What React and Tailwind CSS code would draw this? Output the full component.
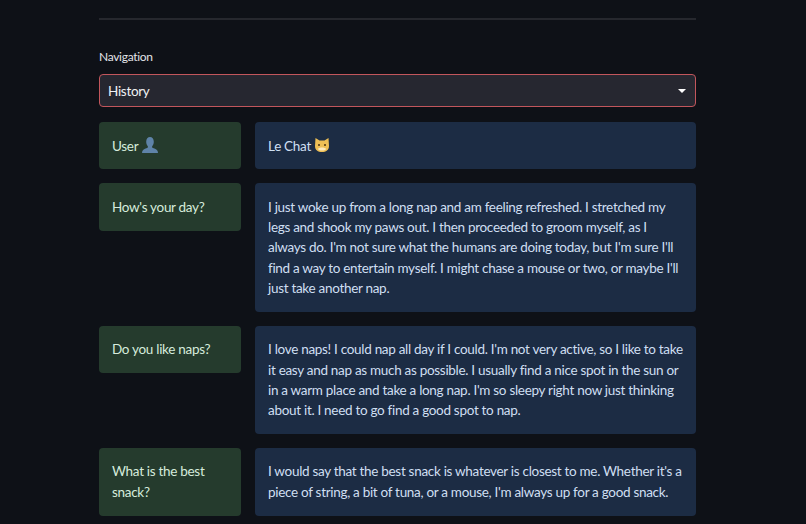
const font = { fontFamily: '"Lato", "Noto Sans", sans-serif' };

const UserIcon = () => (
  <svg viewBox="0 0 18 16" className="inline-block w-[18px] h-4 align-[-2px]">
    <path d="M1 16c0-3 2-4 5-5 1-.5 1-1 .8-1.800C5.800 8 5.200 6.500 5.200 4.800 5.200 2 6.800 0 9 0s3.800 2 3.800 4.800c0 1.700-.6 3.200-1.600 4.400-.2.8-.2 1.300.8 1.800 3 1 5 2 5 5z" fill="#5f83a8" />
  </svg>
);

const CatIcon = () => (
  <svg viewBox="0 0 16 16" className="inline-block w-4 h-4 align-[-2px]">
    <path d="M1.500 1 5.500 3.500h5L14.500 1 15 9c0 4-3 6-7 6s-7-2-7-6z" fill="#eebf55" />
    <path d="M4 12c1-2 7-2 8 0-1 2-7 2-8 0z" fill="#fbe9bd" />
    <circle cx="5" cy="8" r="1" fill="#4a3210" />
    <circle cx="11" cy="8" r="1" fill="#4a3210" />
  </svg>
);

const rows = [
  {
    user: 'How\'s your day?',
    bot: "I just woke up from a long nap and am feeling refreshed. I stretched my legs and shook my paws out. I then proceeded to groom myself, as I always do. I'm not sure what the humans are doing today, but I'm sure I'll find a way to entertain myself. I might chase a mouse or two, or maybe I'll just take another nap.",
  },
  {
    user: 'Do you like naps?',
    bot: "I love naps! I could nap all day if I could. I'm not very active, so I like to take it easy and nap as much as possible. I usually find a nice spot in the sun or in a warm place and take a long nap. I'm so sleepy right now just thinking about it. I need to go find a good spot to nap.",
  },
  {
    user: 'What is the best snack?',
    bot: "I would say that the best snack is whatever is closest to me. Whether it's a piece of string, a bit of tuna, or a mouse, I'm always up for a good snack.",
  },
];

const Row = ({ user, bot }) => (
  <div className="flex items-start gap-[14px]">
    <div className="w-[142px] shrink-0 rounded-[4px] bg-[#253b2d] px-[13px] py-[13.5px] text-[#d6ecdc]">{user}</div>
    <div className="flex-1 rounded-[4px] bg-[#1c2c44] pl-[13px] pr-[11px] py-[13.5px] text-[#cfdff2]">{bot}</div>
  </div>
);

export default function App() {
  return (
    <div className="h-[524px] overflow-hidden bg-[#0e1117] pl-[99px] pr-[110px] text-[13.5px] leading-[20.3px] tracking-[-0.3px]" style={font}>
      <div className="pt-[18px]">
        <hr className="border-t-2 border-[#26282e]" />
        <div className="mt-[29px] text-[12px] leading-[16px] tracking-[-0.3px] text-[#e4e5e8]">Navigation</div>
        <div className="mt-[9px] flex h-[33px] items-center justify-between rounded-[4px] border border-[#c2565c] bg-[#262730] pl-2 pr-[9px] pt-[1px] text-[#f0f1f4]">
          <span>History</span>
          <span className="h-0 w-0 border-x-[4px] border-t-[4px] border-x-transparent border-t-white" />
        </div>
        <div className="mt-[15px] flex flex-col gap-[14px]">
          <Row
            user={<>User <UserIcon /></>}
            bot={<>Le Chat <CatIcon /></>}
          />
          {rows.map((r) => (
            <Row key={r.user} user={r.user} bot={r.bot} />
          ))}
        </div>
      </div>
    </div>
  );
}
